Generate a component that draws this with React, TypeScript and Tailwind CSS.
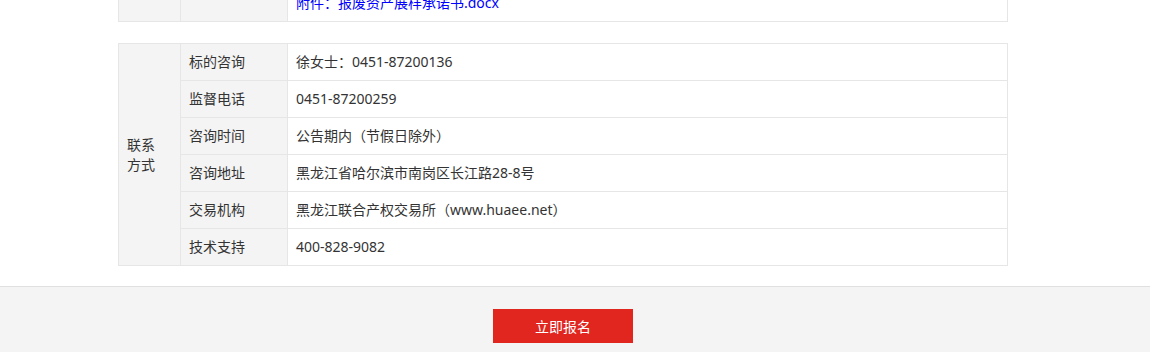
const rows = [
  { label: '标的咨询', value: '徐女士：0451-87200136' },
  { label: '监督电话', value: '0451-87200259' },
  { label: '咨询时间', value: '公告期内（节假日除外）' },
  { label: '咨询地址', value: '黑龙江省哈尔滨市南岗区长江路28-8号' },
  { label: '交易机构', value: '黑龙江联合产权交易所（www.huaee.net）' },
  { label: '技术支持', value: '400-828-9082' },
];

export default function App() {
  return (
    <div
      className="min-h-[353px] bg-white text-[14px] text-[#333]"
      style={{ fontFamily: '"Noto Sans", "Noto Sans CJK SC", "Microsoft YaHei", sans-serif' }}
    >
      <div className="w-[914px] mx-auto">
        {/* previous section, only its bottom row shows */}
        <div className="h-[22px] overflow-hidden flex flex-col justify-end">
          <table className="w-[890px] border-collapse table-fixed">
            <colgroup>
              <col className="w-[62px]" />
              <col className="w-[107px]" />
              <col />
            </colgroup>
            <tbody>
              <tr>
                <td className="border border-[#e6e6e6] bg-[#f4f4f4] leading-[36px] p-0" />
                <td className="border border-[#e6e6e6] bg-[#f4f4f4] leading-[36px] p-0" />
                <td className="border border-[#e6e6e6] leading-[36px] px-[8px] py-0">
                  <a className="text-[#0000ff]">附件：报废资产展样承诺书.docx</a>
                </td>
              </tr>
            </tbody>
          </table>
        </div>

        {/* contact info */}
        <table className="w-[890px] border-collapse table-fixed mt-[21px]">
          <colgroup>
            <col className="w-[62px]" />
            <col className="w-[107px]" />
            <col />
          </colgroup>
          <tbody>
            {rows.map((row, i) => (
              <tr key={row.label}>
                {i === 0 && (
                  <td
                    rowSpan={rows.length}
                    className="border border-[#e6e6e6] bg-[#f4f4f4] px-[8px] py-0 leading-[20px] align-middle"
                  >
                    联系
                    <br />
                    方式
                  </td>
                )}
                <td className="border border-[#e6e6e6] bg-[#f4f4f4] px-[8px] py-0 leading-[36px]">
                  {row.label}
                </td>
                <td className="border border-[#e6e6e6] px-[8px] py-0 leading-[36px]">
                  {row.value}
                </td>
              </tr>
            ))}
          </tbody>
        </table>
      </div>

      {/* footer bar */}
      <div className="mt-[20px] border-t border-[#e0e0e0] bg-[#f4f4f4] h-[66px] flex justify-center pr-[24px] pt-[22px]">
        <button className="w-[140px] h-[34px] bg-[#e1251f] text-white text-[14px]">
          立即报名
        </button>
      </div>
    </div>
  );
}
